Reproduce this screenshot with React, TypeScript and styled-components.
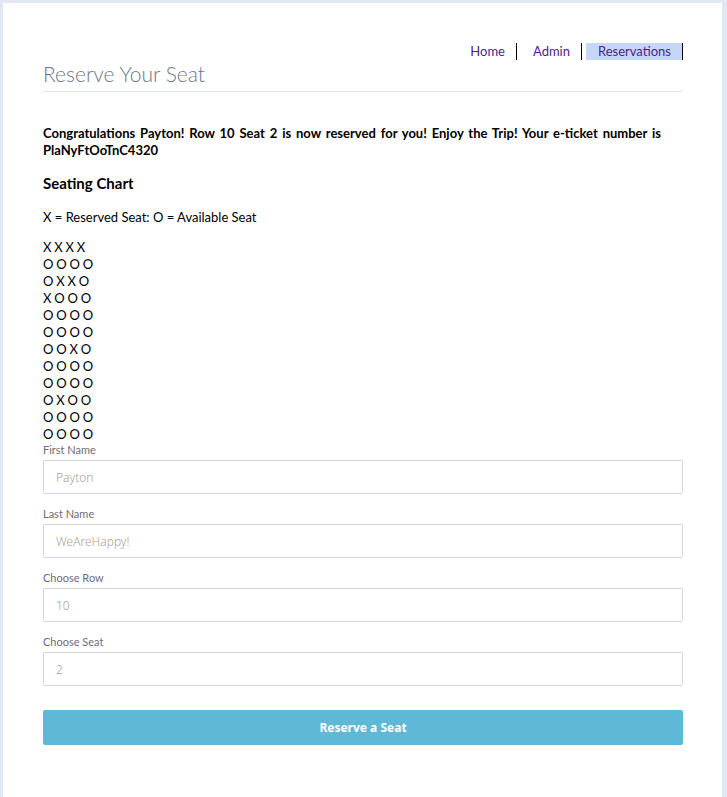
import React from "react";
import styled, { createGlobalStyle } from "styled-components";

const GlobalStyle = createGlobalStyle`
  html, body {
    margin: 0;
    padding: 0;
    background: #e1e8f2;
  }
  body {
    font-family: Lato, "Open Sans", sans-serif;
    color: #000;
  }
`;

const Page = styled.div`
  padding: 3px 5px 0 3px;
`;

const Card = styled.main`
  background: #ffffff;
  min-height: 830px;
  padding: 40px 39px 0 40px;
  box-sizing: border-box;
`;

const Header = styled.header`
  display: flex;
  flex-direction: column;
  border-bottom: 1px solid #dde3ea;
  padding-bottom: 4px;
`;

const Nav = styled.nav`
  display: flex;
  justify-content: flex-end;
  gap: 4px;
`;

const NavLink = styled.a<{ $active?: boolean }>`
  display: block;
  height: 17px;
  line-height: 17px;
  padding: 0 11px 0 12px;
  font-size: 13px;
  color: #4e1d8c;
  text-decoration: none;
  border-right: 1px solid #000;
  background: ${(p) => (p.$active ? "#c5d6f6" : "transparent")};
`;

const Title = styled.h1`
  margin: 0;
  font-size: 21px;
  font-weight: 300;
  line-height: 27px;
  color: #6e7686;
`;

const Message = styled.p`
  margin: 33px 0 0;
  font-size: 13px;
  font-weight: 700;
  line-height: 17px;
  word-spacing: 1.7px;
`;

const SectionTitle = styled.h3`
  margin: 14px 0 0;
  font-size: 15px;
  font-weight: 700;
  line-height: 20px;
`;

const Legend = styled.p`
  margin: 16px 0 0;
  font-size: 13px;
  line-height: 17px;
`;

const Chart = styled.div`
  margin-top: 13px;
  display: flex;
  flex-direction: column;
`;

const SeatRow = styled.div`
  font-size: 13px;
  line-height: 17px;
  white-space: pre;
  word-spacing: -0.5px;
`;

const Form = styled.form`
  display: flex;
  flex-direction: column;
`;

const Field = styled.div`
  display: flex;
  flex-direction: column;
  margin-bottom: 13px;
`;

const Label = styled.label`
  font-size: 11px;
  line-height: 14px;
  margin-bottom: 3px;
  color: #6d6d78;
`;

const Input = styled.input`
  box-sizing: border-box;
  height: 34px;
  width: 100%;
  border: 1px solid #d3d8e2;
  border-radius: 2px;
  padding: 0 12px;
  font-family: "Noto Sans", sans-serif;
  font-size: 12px;
  font-weight: 300;
  color: #aa9e92;
  background: #fff;
  outline: none;
`;

const Button = styled.button`
  margin-top: 11px;
  height: 35px;
  width: 100%;
  border: none;
  border-radius: 2px;
  background: #5eb8d6;
  color: #fff;
  font-family: "Noto Sans", sans-serif;
  font-size: 12px;
  font-weight: 700;
  cursor: pointer;
`;

const seats = [
  "X X X X",
  "O O O O",
  "O X X O",
  "X O O O",
  "O O O O",
  "O O O O",
  "O O X O",
  "O O O O",
  "O O O O",
  "O X O O",
  "O O O O",
  "O O O O",
];

const fields = [
  { label: "First Name", value: "Payton" },
  { label: "Last Name", value: "WeAreHappy!" },
  { label: "Choose Row", value: "10" },
  { label: "Choose Seat", value: "2" },
];

export default function App() {
  return (
    <>
      <GlobalStyle />
      <Page>
        <Card>
          <Header>
            <Nav>
              <NavLink href="#">Home</NavLink>
              <NavLink href="#">Admin</NavLink>
              <NavLink href="#" $active>
                Reservations
              </NavLink>
            </Nav>
            <Title>Reserve Your Seat</Title>
          </Header>
          <Message>
            Congratulations Payton! Row 10 Seat 2 is now reserved for you! Enjoy the Trip! Your
            e-ticket number is PlaNyFtOoTnC4320
          </Message>
          <SectionTitle>Seating Chart</SectionTitle>
          <Legend>X = Reserved Seat: O = Available Seat</Legend>
          <Chart>
            {seats.map((r, i) => (
              <SeatRow key={i}>{r}</SeatRow>
            ))}
          </Chart>
          <Form onSubmit={(e) => e.preventDefault()}>
            {fields.map((f) => (
              <Field key={f.label}>
                <Label>{f.label}</Label>
                <Input defaultValue={f.value} />
              </Field>
            ))}
            <Button type="submit">Reserve a Seat</Button>
          </Form>
        </Card>
      </Page>
    </>
  );
}
